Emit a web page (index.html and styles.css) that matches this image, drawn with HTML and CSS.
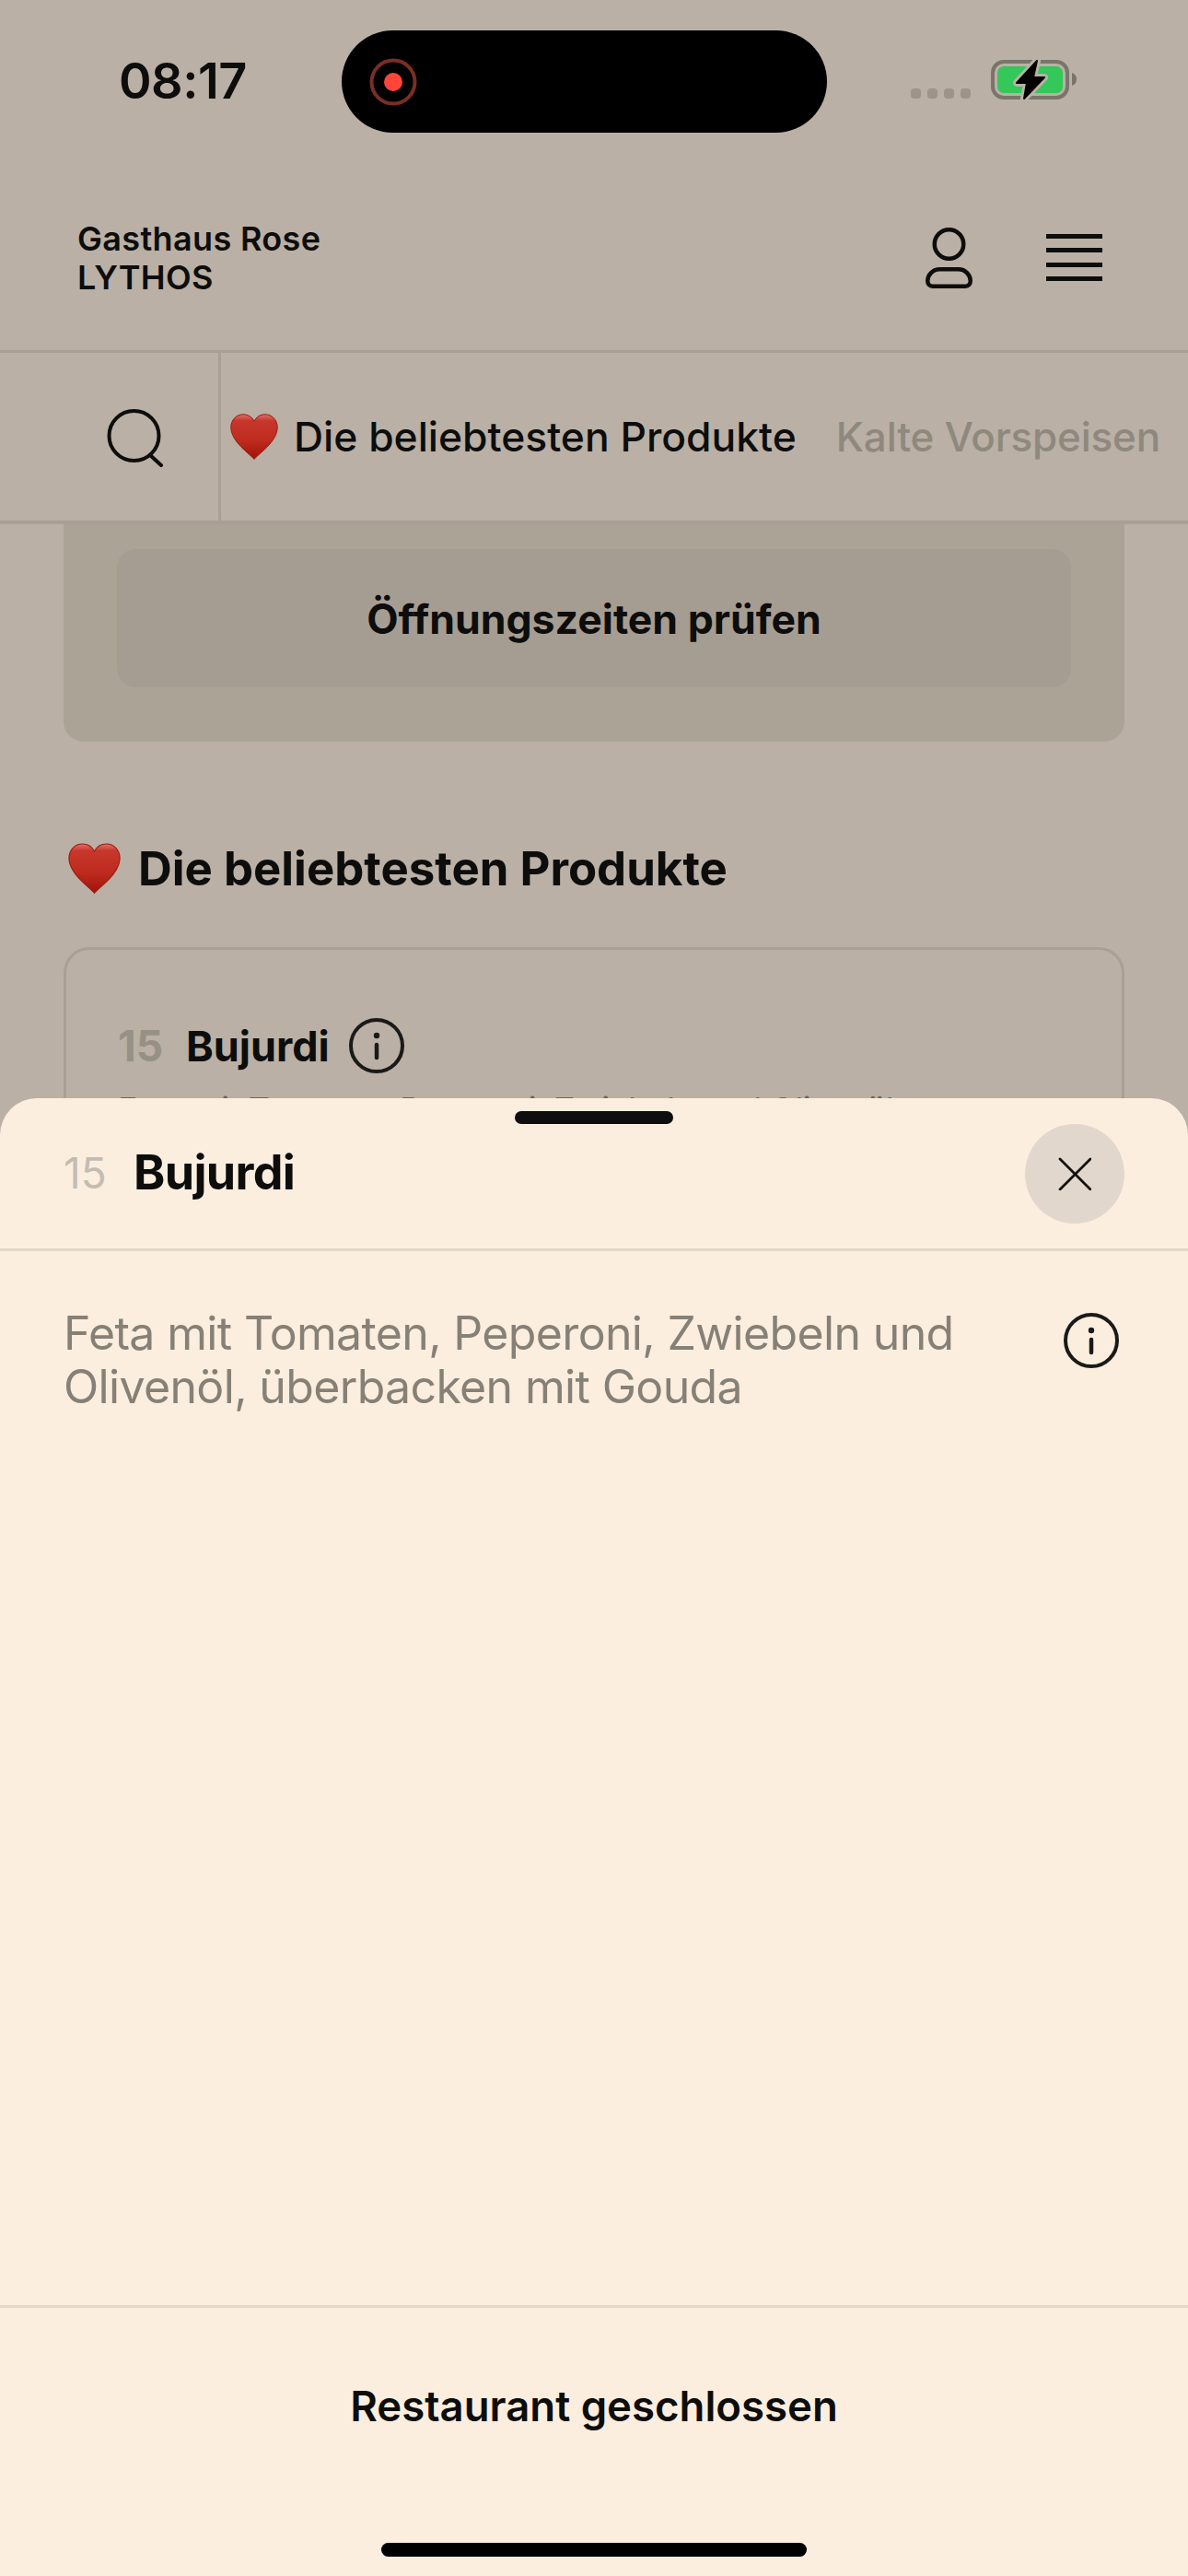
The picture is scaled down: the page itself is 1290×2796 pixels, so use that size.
FILE: index.html
```html
<!DOCTYPE html>
<html lang="de">
<head>
<meta charset="utf-8">
<title>Gasthaus Rose LYTHOS</title>
<link rel="stylesheet" href="styles.css">
</head>
<body>
<svg class="defs" width="0" height="0" aria-hidden="true">
  <defs>
    <linearGradient id="heartFill" x1="0" y1="0" x2="0" y2="1">
      <stop offset="0" stop-color="#d9746a"/>
      <stop offset="0.14" stop-color="#c8372c"/>
      <stop offset="0.6" stop-color="#bd2a1e"/>
      <stop offset="1" stop-color="#a01208"/>
    </linearGradient>
    <symbol id="heart" viewBox="0 0 52 50">
      <path d="M26 49.500C22 44 1 31 .8 15 .7 6.500 7 .8 14 .8c5.500 0 9.800 2.800 12 7.400C28.200 3.600 32.500.8 38 .8c7 0 13.300 5.700 13.200 14.200C51 31 30 44 26 49.500z" fill="url(#heartFill)" stroke="#9c1a10" stroke-width="1"/>
    </symbol>
    <symbol id="info" viewBox="0 0 60 60">
      <circle cx="30" cy="30" r="28" fill="none" stroke="#1a1a18" stroke-width="4"/>
      <circle cx="30" cy="19" r="3.200" fill="#1a1a18"/>
      <path d="M30 29v14" fill="none" stroke="#1a1a18" stroke-width="4.500" stroke-linecap="round"/>
    </symbol>
  </defs>
</svg>

<div class="status">
  <div class="time-wrap"><span class="time">08:17</span></div>
  <div class="island">
    <svg class="rec" width="52" height="52" viewBox="0 0 52 52">
      <circle cx="26" cy="26" r="23.500" fill="none" stroke="#7a2e26" stroke-width="4"/>
      <circle cx="26" cy="26" r="10" fill="#ff453a"/>
    </svg>
  </div>
  <div class="status-right">
    <div class="dots"><i></i><i></i><i></i><i></i></div>
    <svg class="battery" width="94" height="46" viewBox="0 0 94 46">
      <rect x="2" y="3" width="81" height="39" rx="12" fill="none" stroke="#7a746b" stroke-width="4"/>
      <rect x="7" y="8" width="71" height="29" rx="7" fill="#34c759"/>
      <path d="M88 15c3 1 5 3.500 5 7s-2 6-5 7z" fill="#7a746b"/>
      <path d="M50 2 28 26h11l-3 17 22-23H46z" fill="#000" stroke="#bab0a5" stroke-width="8" stroke-linejoin="round"/>
      <path d="M50 2 28 26h11l-3 17 22-23H46z" fill="#000" stroke="#000" stroke-width="2" stroke-linejoin="round"/>
    </svg>
  </div>
</div>

<header class="header">
  <div class="brand">Gasthaus Rose<br>LYTHOS</div>
  <div class="header-icons">
    <svg width="51" height="66" viewBox="0 0 51 66">
      <circle cx="25.500" cy="18" r="15.750" fill="none" stroke="#0d0d0c" stroke-width="4.500"/>
      <path d="M15 45.250h21c7 0 12.750 6 12.750 12.500 0 3.500-2 6-5.500 6H7.750c-3.500 0-5.500-2.500-5.500-6 0-6.500 5.750-12.500 12.750-12.500z" fill="none" stroke="#0d0d0c" stroke-width="4.500"/>
    </svg>
    <div class="menu"><i></i><i></i><i></i><i></i></div>
  </div>
</header>

<nav class="tabs">
  <div class="search">
    <svg width="66" height="66" viewBox="0 0 66 66">
      <circle cx="30.500" cy="32" r="27" fill="none" stroke="#0d0d0c" stroke-width="4"/>
      <path d="M48 53 60 64" fill="none" stroke="#0d0d0c" stroke-width="4" stroke-linecap="round"/>
    </svg>
  </div>
  <div class="tab-list">
    <span class="tab active"><svg class="tab-heart"><use href="#heart"/></svg>Die beliebtesten Produkte</span>
    <span class="tab muted">Kalte Vorspeisen</span>
  </div>
</nav>

<main class="content">
  <section class="notice"><div class="notice-btn">Öffnungszeiten prüfen</div></section>
  <h2 class="heading"><svg class="heading-heart"><use href="#heart"/></svg>Die beliebtesten Produkte</h2>
  <article class="product">
    <div class="product-row">
      <span class="product-num">15</span>
      <span class="product-name">Bujurdi</span>
      <svg class="info"><use href="#info"/></svg>
    </div>
    <p class="product-desc">Feta mit Tomaten, Peperoni, Zwiebeln und Olivenöl, überbacken mit Gouda</p>
  </article>
</main>

<aside class="sheet">
  <div class="sheet-head">
    <div class="handle"></div>
    <div class="sheet-row">
      <div class="sheet-title"><span class="sheet-num">15</span><span class="sheet-name">Bujurdi</span></div>
      <div class="close">
        <svg width="36" height="36" viewBox="0 0 36 36">
          <path d="M2 2 35 35M35 2 2 35" fill="none" stroke="#11110f" stroke-width="2.800" stroke-linecap="round"/>
        </svg>
      </div>
    </div>
  </div>
  <div class="sheet-body">
    <p class="sheet-desc">Feta mit Tomaten, Peperoni, Zwiebeln und Olivenöl, überbacken mit Gouda</p>
    <svg class="info sheet-info"><use href="#info"/></svg>
  </div>
  <div class="sheet-foot">
    <div class="closed">Restaurant geschlossen</div>
    <div class="home"></div>
  </div>
</aside>
</body>
</html>
```
FILE: styles.css
```css
* { box-sizing: border-box; }
html, body { margin: 0; padding: 0; }
body {
  position: relative;
  width: 1290px;
  height: 2796px;
  overflow: hidden;
  background: #bab0a5;
  color: #0d0d0c;
  font-family: Inter, "Liberation Sans", sans-serif;
}
.defs { position: absolute; }

.status { display: flex; align-items: flex-start; height: 182px; padding-top: 33px; }
.time-wrap { display: flex; align-items: center; width: 371px; height: 111px; padding: 0 0 2px 129px; }
.time { font-size: 54px; font-weight: 600; letter-spacing: -0.5px; }
.island { display: flex; align-items: center; width: 527px; height: 111px; padding-left: 30px; background: #000; border-radius: 56px; }
.status-right { display: flex; align-items: flex-end; height: 46px; margin: 31px 0 0 91px; gap: 33px; }
.dots { display: flex; gap: 7px; margin-bottom: 3px; }
.dots i { display: block; width: 11px; height: 11px; border-radius: 4px; background: #9c9488; }
.battery { margin-left: -11px; }

.header { display: flex; align-items: center; justify-content: space-between; height: 201px; padding: 0 93px 3px 84px; border-bottom: 3px solid #a99f94; }
.brand { font-size: 36px; font-weight: 600; line-height: 42px; letter-spacing: 0.35px; }
.header-icons { display: flex; align-items: center; gap: 80px; }
.menu { display: flex; flex-direction: column; gap: 10.300px; width: 61px; }
.menu i { display: block; height: 5px; background: #0d0d0c; }

.tabs { display: flex; height: 186px; border-bottom: 4px solid #a99f94; }
.search { display: flex; align-items: center; width: 240px; padding-left: 115px; border-right: 3px solid #a99f94; }
.tab-list { display: flex; align-items: center; gap: 43px; padding-left: 10px; white-space: nowrap; overflow: hidden; }
.tab { display: flex; align-items: center; font-size: 44px; font-weight: 500; }
.tab.active { font-size: 44.400px; color: #0d0d0c; }
.tab.muted { color: #8f887d; letter-spacing: -0.2px; }
.tab-heart { width: 52px; height: 50px; margin-right: 17px; }

.content { height: 623px; padding: 0 69px; overflow: hidden; }
.notice { height: 236px; padding: 27px 58px 0; background: #aca397; border-radius: 0 0 22px 22px; }
.notice-btn { display: flex; align-items: center; justify-content: center; height: 150px; padding-top: 2px; background: #a69d92; border-radius: 20px; font-size: 44.600px; font-weight: 700; }
.heading { display: flex; align-items: center; gap: 19px; margin: 109px 0 0 5px; font-size: 50.900px; font-weight: 700; line-height: 57px; }
.heading-heart { width: 57px; height: 57px; }

.product { height: 500px; margin-top: 57px; padding: 74px 56px 0; border: 3px solid #a99f94; border-radius: 28px; }
.product-row { display: flex; align-items: center; height: 60px; }
.product-num { width: 74px; font-size: 46px; font-weight: 700; color: #979085; }
.product-name { font-size: 45px; font-weight: 700; }
.info { width: 60px; height: 60px; flex: none; }
.product-row .info { margin-left: 21px; }
.product-desc { height: 44px; margin: 17px 0 0; overflow: hidden; font-size: 36px; line-height: 44px; letter-spacing: -0.4px; color: #6c665d; }

.sheet { position: absolute; top: 1192px; left: 0; right: 0; bottom: 0; display: flex; flex-direction: column; background: #fbeedf; border-radius: 40px 40px 0 0; }
.sheet-head { height: 166px; border-bottom: 3px solid #e2d7cc; }
.handle { width: 172px; height: 14px; margin: 14px auto 0; background: #0e0e0e; border-radius: 7px; }
.sheet-row { display: flex; align-items: center; justify-content: space-between; padding: 0 69px; }
.sheet-title { display: flex; align-items: center; padding-bottom: 3px; }
.sheet-num { width: 76px; font-size: 46px; font-weight: 400; color: #c5bcb1; }
.sheet-name { font-size: 52px; font-weight: 700; letter-spacing: -0.7px; }
.close { display: flex; align-items: center; justify-content: center; width: 108px; height: 108px; background: #e2d7cc; border-radius: 50%; }
.sheet-body { display: flex; flex: 1; justify-content: space-between; padding: 60px 75px 0 69px; }
.sheet-desc { width: 1010px; margin: 0; font-size: 50px; line-height: 58px; letter-spacing: -0.65px; color: #868076; }
.sheet-info { margin-top: 7px; }
.sheet-foot { display: flex; flex-direction: column; align-items: center; height: 294px; padding-top: 79px; border-top: 3px solid #e2d7cc; }
.closed { font-size: 45.500px; font-weight: 600; line-height: 56px; }
.home { width: 462px; height: 15px; margin-top: 120px; background: #000; border-radius: 8px; }
```
